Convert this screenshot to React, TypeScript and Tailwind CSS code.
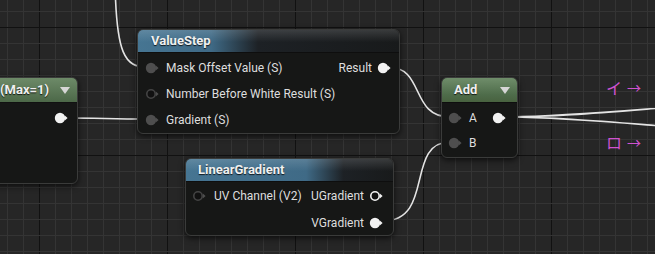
import React from "react";

// material graph canvas: grid, wires, nodes
type PinKind = "in" | "inOpen" | "out" | "outOpen";

function Pin({ kind }: { kind: PinKind }) {
  const isOut = kind === "out" || kind === "outOpen";
  const open = kind === "inOpen" || kind === "outOpen";
  const color = isOut ? "#f2f2f2" : "#4e4e4e";
  return (
    <svg width="15" height="12" viewBox="0 0 15 12" className="shrink-0">
      {open ? (
        <circle cx="6" cy="6" r="4.2" fill="#111" stroke={isOut ? "#f2f2f2" : "#444"} strokeWidth="1.6" />
      ) : (
        <circle cx="6" cy="6" r="5.2" fill={color} />
      )}
      <path d="M10.8 3.6 L13.6 6 L10.8 8.4 Z" fill={isOut ? "#f2f2f2" : "#4e4e4e"} />
    </svg>
  );
}

function Triangle() {
  return (
    <svg width="10" height="7" viewBox="0 0 10 7" className="shrink-0">
      <path d="M0 0 L10 0 L5 7 Z" fill="#d6d6d6" />
    </svg>
  );
}

function Grid() {
  const vx = Array.from({ length: 42 }, (_, i) => 7 + i * 16);
  const hy = Array.from({ length: 17 }, (_, i) => 11 + i * 16);
  return (
    <svg className="absolute inset-0" width="655" height="254">
      {vx.map((x) => (
        <line key={"v" + x} x1={x + 0.5} y1="0" x2={x + 0.5} y2="254" stroke={(x - 39) % 128 === 0 ? "#111" : "#343434"} strokeWidth="1" />
      ))}
      {hy.map((y) => (
        <line key={"h" + y} x1="0" y1={y + 0.5} x2="655" y2={y + 0.5} stroke={(y - 27) % 128 === 0 ? "#111" : "#343434"} strokeWidth="1" />
      ))}
    </svg>
  );
}

function Wires() {
  const w = { fill: "none", stroke: "#e4e4e4", strokeWidth: 1.6 };
  return (
    <svg className="absolute inset-0" width="655" height="254">
      <path d="M115 -20 C116 55 125 67 147 67" {...w} />
      <path d="M64 118 C100 118 110 119 147 119" {...w} />
      <path d="M388 67 C425 67 410 117 450 117" {...w} />
      <path d="M383 221 C435 221 405 142 450 142" {...w} />
      <path d="M504 117 C600 117 700 100 900 95" {...w} />
      <path d="M504 117 C600 117 700 134 900 139" {...w} />
    </svg>
  );
}

const body = "absolute rounded-[6px] border border-[#3a3b3a] bg-[#161716] shadow-[0_2px_6px_rgba(0,0,0,0.7)] overflow-hidden";
const title = "font-bold text-[13px] text-[#f0f0f0] [text-shadow:0_1px_1px_rgba(0,0,0,0.8)] whitespace-nowrap";
const label = "text-[12px] text-[#dedede] whitespace-nowrap";

export default function App() {
  return (
    <div className="relative w-[655px] h-[254px] overflow-hidden bg-[#262626] font-['Roboto',sans-serif]">
      <Grid />
      <Wires />

      {/* clamp node, mostly off screen */}
      <div className={`${body} left-[-80px] top-[77px] w-[158px] h-[107px]`}>
        <div className="h-[25px] flex items-center justify-end gap-[11px] pr-[7px] border-b border-[#111] bg-[linear-gradient(to_bottom,#6d8a68,#4c6848)]">
          <span className={title}>(Max=1)</span>
          <Triangle />
        </div>
        <div className="flex justify-end pr-[8px] pt-[9px]">
          <Pin kind="out" />
        </div>
      </div>

      {/* ValueStep */}
      <div className={`${body} left-[137px] top-[29px] w-[263px] h-[105px]`}>
        <div className="h-[23px] flex items-center pl-[13px] border-b border-[#0e0e0e] bg-[linear-gradient(to_bottom,rgba(255,255,255,0.14),rgba(255,255,255,0)_55%),linear-gradient(to_right,#467592_0%,#3f6a86_28%,#1d2125_46%,#181a1b_100%)]">
          <span className={title}>ValueStep</span>
        </div>
        <div className="flex justify-between pt-[2px]">
          <div className="flex flex-col">
            {[
              ["in", "Mask Offset Value (S)"],
              ["inOpen", "Number Before White Result (S)"],
              ["in", "Gradient (S)"],
            ].map(([k, t]) => (
              <div key={t} className="h-[26px] flex items-center pl-[7px] gap-[6px]">
                <Pin kind={k as PinKind} />
                <span className={label}>{t}</span>
              </div>
            ))}
          </div>
          <div className="flex flex-col pr-[7px]">
            <div className="h-[26px] flex items-center gap-[5px]">
              <span className={label}>Result</span>
              <Pin kind="out" />
            </div>
          </div>
        </div>
      </div>

      {/* Add */}
      <div className={`${body} left-[441px] top-[77px] w-[77px] h-[81px]`}>
        <div className="h-[25px] flex items-center justify-between pl-[12px] pr-[7px] border-b border-[#0e0e0e] bg-[linear-gradient(to_bottom,#6f8d6a,#4e6c4a_70%,#48623f)]">
          <span className={title}>Add</span>
          <Triangle />
        </div>
        <div className="flex justify-between pt-[2px]">
          <div className="flex flex-col">
            {["A", "B"].map((t) => (
              <div key={t} className="h-[25px] flex items-center pl-[6px] gap-[6px]">
                <Pin kind="in" />
                <span className={label}>{t}</span>
              </div>
            ))}
          </div>
          <div className="flex flex-col pr-[10px]">
            <div className="h-[25px] flex items-center">
              <Pin kind="out" />
            </div>
          </div>
        </div>
      </div>

      {/* LinearGradient */}
      <div className={`${body} left-[185px] top-[158px] w-[209px] h-[78px]`}>
        <div className="h-[23px] flex items-center pl-[12px] border-b border-[#0e0e0e] bg-[linear-gradient(to_bottom,rgba(255,255,255,0.14),rgba(255,255,255,0)_55%),linear-gradient(to_right,#467592_0%,#3f6a86_58%,#1d2125_76%,#181a1b_100%)]">
          <span className={title}>LinearGradient</span>
        </div>
        <div className="flex justify-between">
          <div className="flex flex-col">
            <div className="h-[27px] flex items-center pl-[6px] gap-[7px]">
              <Pin kind="inOpen" />
              <span className={label}>UV Channel (V2)</span>
            </div>
          </div>
          <div className="flex flex-col items-end pr-[9px]">
            <div className="h-[27px] flex items-center gap-[5px]">
              <span className={label}>UGradient</span>
              <Pin kind="outOpen" />
            </div>
            <div className="h-[27px] flex items-center gap-[5px]">
              <span className={label}>VGradient</span>
              <Pin kind="out" />
            </div>
          </div>
        </div>
      </div>

      {/* hand-written labels */}
      <div className="absolute left-[606px] top-[75px] flex items-center gap-[5px] text-[#cf52cf] text-[16px] font-['Noto_Sans_CJK_JP',sans-serif]">
        <span>イ</span>
        <span className="text-[14px]">→</span>
      </div>
      <div className="absolute left-[606px] top-[130px] flex items-center gap-[5px] text-[#cf52cf] text-[16px] font-['Noto_Sans_CJK_JP',sans-serif]">
        <span>ロ</span>
        <span className="text-[14px]">→</span>
      </div>
    </div>
  );
}
